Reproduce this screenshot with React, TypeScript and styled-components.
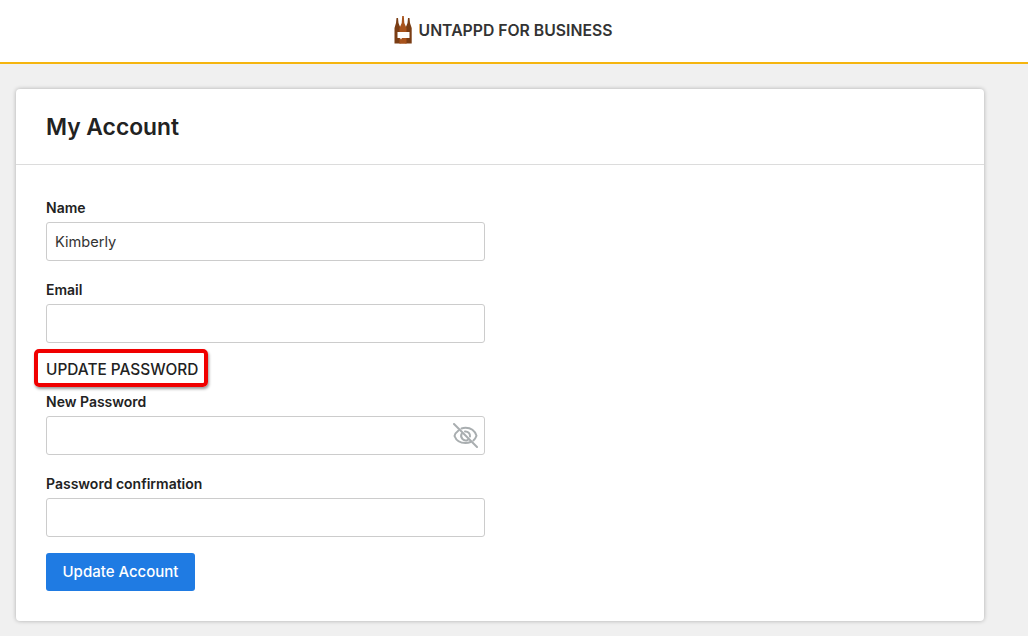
import styled, { createGlobalStyle } from "styled-components";

const GlobalStyle = createGlobalStyle`
  html, body {
    margin: 0;
    padding: 0;
    background: #f0f0f0;
    font-family: Inter, "Liberation Sans", sans-serif;
    color: #222;
  }
  * {
    box-sizing: border-box;
  }
`;

const Page = styled.div`
  width: 1028px;
  height: 636px;
  overflow: hidden;
`;

const TopBar = styled.header`
  height: 64px;
  background: #fff;
  border-bottom: 2px solid #f5b50f;
  display: flex;
  align-items: center;
  justify-content: center;
  gap: 7px;
  padding-right: 22px;
  padding-bottom: 2px;
`;

const Brand = styled.span`
  font-size: 15.75px;
  font-weight: 600;
  color: #333;
`;

const Main = styled.main`
  padding: 25px 44px 0 16px;
`;

const Card = styled.section`
  height: 532px;
  background: #fff;
  border-radius: 4px;
  box-shadow: 0 0 4px rgba(0, 0, 0, 0.28);
`;

const CardHeader = styled.div`
  height: 76px;
  padding: 0 30px 1px;
  display: flex;
  align-items: center;
  border-bottom: 1px solid #dcdcdc;
`;

const Title = styled.h1`
  margin: 0;
  font-size: 22.8px;
  font-weight: 600;
  color: #222;
`;

const CardBody = styled.form`
  width: 469px;
  padding: 34px 0 0 30px;
`;

const Field = styled.div<{ $last?: boolean }>`
  margin-bottom: ${(p) => (p.$last ? "16px" : "20px")};
`;

const Label = styled.label`
  display: block;
  height: 18px;
  margin-bottom: 5px;
  font-size: 14px;
  line-height: 18px;
  font-weight: 600;
  color: #222;
`;

const InputWrap = styled.div`
  position: relative;
`;

const Input = styled.input`
  display: block;
  width: 100%;
  height: 39px;
  padding: 0 8px;
  background: #fff;
  border: 1px solid #ccc;
  border-radius: 3px;
  font-family: inherit;
  font-size: 14.6px;
  color: #333;
  outline: none;
`;

const EyeButton = styled.span`
  position: absolute;
  top: 7px;
  right: 7px;
  display: flex;
  color: #a9aeb0;
`;

const SectionHeading = styled.h2`
  position: relative;
  margin: -7px 0 11px;
  height: 26px;
  font-size: 15.4px;
  line-height: 28px;
  font-weight: 500;
  color: #222;

  &::after {
    content: "";
    box-sizing: border-box;
    position: absolute;
    left: -12px;
    top: -7px;
    width: 174px;
    height: 38px;
    border: 4px solid #f00000;
    border-radius: 5px;
    box-shadow: 1px 2px 3px rgba(0, 0, 0, 0.4);
  }
`;

const SubmitButton = styled.button`
  display: block;
  width: 149px;
  height: 38px;
  padding: 0 0 2px;
  background: #1f7be3;
  border: none;
  border-radius: 3px;
  font-family: inherit;
  font-size: 15px;
  font-weight: 500;
  color: #fff;
`;

const BottlesLogo = () => (
  <svg width="18" height="28" viewBox="0 0 18 28" aria-hidden="true">
    <path
      d="M2.500 2h1.500l.5 5 2 5v15.500H0.500V12l1.500-5z"
      fill="#7a3d14"
    />
    <path
      d="M14 2h1.500l.5 5 1.700 5v15.500H11.500V12l2-5z"
      fill="#7a3d14"
    />
    <path
      d="M8.200 0h1.600l.5 7 2.200 5v15.800H5.500V12l2.200-5z"
      fill="#a8531c"
    />
    <path d="M3.500 16h12v6H8l-1 1.500L6 22H3.500z" fill="#fff" />
  </svg>
);

const HiddenEye = () => (
  <svg
    width="25"
    height="25"
    viewBox="0 0 25 25"
    fill="none"
    stroke="currentColor"
    strokeWidth="2"
    strokeLinecap="round"
    strokeLinejoin="round"
    aria-hidden="true"
  >
    <path d="M1 1l23 23" />
    <path d="M5.500 7.500C3.500 9 2 11 1.500 13c1.500 4 5.500 7 11 7 1.800 0 3.500-.3 5-1" />
    <path d="M8.500 5.500C9.800 5 11.100 4.800 12.500 4.800c5.500 0 9.500 3.500 11 8-.6 1.800-1.700 3.400-3.100 4.700" />
    <path d="M8.800 10.600a4.500 4.500 0 0 0 6.100 6.200" />
    <path d="M12 8.500a4.500 4.500 0 0 1 5 5" />
  </svg>
);

export default function App() {
  return (
    <Page>
      <GlobalStyle />
      <TopBar>
        <BottlesLogo />
        <Brand>UNTAPPD FOR BUSINESS</Brand>
      </TopBar>
      <Main>
        <Card>
          <CardHeader>
            <Title>My Account</Title>
          </CardHeader>
          <CardBody>
            <Field>
              <Label>Name</Label>
              <Input defaultValue="Kimberly" />
            </Field>
            <Field>
              <Label>Email</Label>
              <Input />
            </Field>
            <SectionHeading>UPDATE PASSWORD</SectionHeading>
            <Field>
              <Label>New Password</Label>
              <InputWrap>
                <Input type="password" />
                <EyeButton>
                  <HiddenEye />
                </EyeButton>
              </InputWrap>
            </Field>
            <Field $last>
              <Label>Password confirmation</Label>
              <Input type="password" />
            </Field>
            <SubmitButton type="button">Update Account</SubmitButton>
          </CardBody>
        </Card>
      </Main>
    </Page>
  );
}
